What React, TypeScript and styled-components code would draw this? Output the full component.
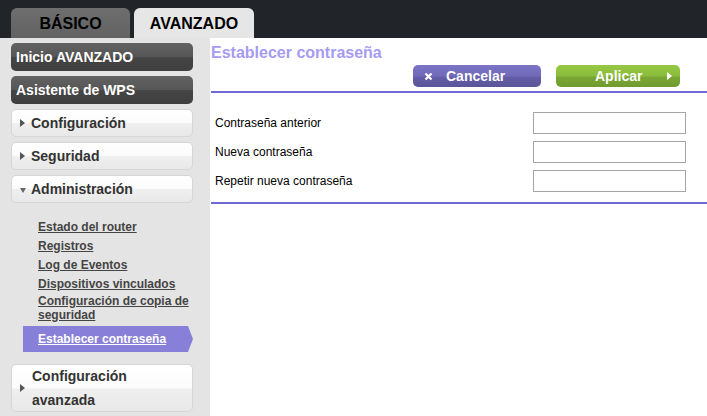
import React from 'react';
import styled, { createGlobalStyle } from 'styled-components';

const GlobalStyle = createGlobalStyle`
  html, body {
    margin: 0;
    padding: 0;
    background: #ffffff;
    font-family: "Liberation Sans", Arial, sans-serif;
  }
`;

const Page = styled.div`
  width: 707px;
  height: 416px;
  display: flex;
  flex-direction: column;
  overflow: hidden;
`;

const TopBar = styled.div`
  height: 38px;
  flex-shrink: 0;
  background: #212529;
  display: flex;
  align-items: flex-end;
  gap: 4px;
  padding-left: 11px;
  box-sizing: border-box;
`;

const Tab = styled.div<{ $active?: boolean }>`
  width: ${(p) => (p.$active ? '120px' : '119px')};
  height: 30px;
  border-radius: 6px 6px 0 0;
  background: ${(p) => (p.$active ? '#e6e6e6' : 'linear-gradient(#6e6e6e, #626262)')};
  color: #000;
  font-size: 16px;
  font-weight: bold;
  display: flex;
  align-items: center;
  justify-content: center;
  padding-top: 2px;
  box-sizing: border-box;
`;

const Body = styled.div`
  flex: 1;
  display: flex;
  min-height: 0;
`;

const Sidebar = styled.div`
  width: 210px;
  background: #e4e4e4;
  padding: 5px 0 0 11px;
  box-sizing: border-box;
  display: flex;
  flex-direction: column;
`;

const DarkButton = styled.div`
  width: 182px;
  height: 28px;
  flex-shrink: 0;
  border-radius: 5px;
  background: linear-gradient(#626262 0%, #565656 50%, #454545 52%, #3f3f3f 100%);
  color: #fff;
  font-size: 14px;
  font-weight: bold;
  display: flex;
  align-items: center;
  padding-left: 5px;
  box-sizing: border-box;
  margin-bottom: 5px;
`;

const LightButton = styled.div<{ $tall?: boolean }>`
  width: 182px;
  height: ${(p) => (p.$tall ? '48px' : '28px')};
  flex-shrink: 0;
  border-radius: 5px;
  border: 1px solid #d6d6d6;
  background: linear-gradient(#ffffff 0%, #fbfbfb 50%, #efefef 52%, #e8e8e8 100%);
  color: #333;
  font-size: 14px;
  font-weight: bold;
  display: flex;
  align-items: center;
  padding-left: 8px;
  box-sizing: border-box;
  margin-bottom: 5px;
`;

const Arrow = styled.span<{ $down?: boolean }>`
  display: inline-block;
  flex-shrink: 0;
  width: 0;
  height: 0;
  margin-right: 6px;
  ${(p) =>
    p.$down
      ? `border-left: 3.5px solid transparent; border-right: 3.5px solid transparent; border-top: 5px solid #666; margin-top: 2px; margin-right: 5px;`
      : `border-top: 4px solid transparent; border-bottom: 4px solid transparent; border-left: 5px solid #555;`}
`;

const TwoLines = styled.span`
  display: flex;
  flex-direction: column;
  line-height: 24px;
  margin-left: 1px;
`;

const SubMenu = styled.div`
  display: flex;
  flex-direction: column;
  margin: 10px 0 12px 0;
`;

const SubLink = styled.a<{ $two?: boolean }>`
  display: block;
  padding-left: 27px;
  font-size: 12px;
  font-weight: bold;
  color: #444;
  text-decoration: underline;
  line-height: ${(p) => (p.$two ? '14px' : '19px')};
  width: 185px;
  box-sizing: border-box;
`;

const ActiveLink = styled.a`
  display: flex;
  align-items: center;
  margin: 4px 0 0 12px;
  width: 170px;
  height: 26px;
  padding-left: 15px;
  box-sizing: border-box;
  background: #8880d8;
  clip-path: polygon(0 0, 165px 0, 100% 50%, 165px 100%, 0 100%);
  color: #fff;
  font-size: 12px;
  font-weight: bold;
  text-decoration: underline;
`;

const Content = styled.div`
  flex: 1;
  background: #fff;
  padding-left: 1px;
  display: flex;
  flex-direction: column;
`;

const Title = styled.div`
  margin-top: 4px;
  line-height: 22px;
  font-size: 16px;
  font-weight: bold;
  color: #a59cf2;
`;

const ButtonRow = styled.div`
  display: flex;
  justify-content: flex-end;
  gap: 15px;
  padding-right: 27px;
  margin-top: 1px;
`;

const ActionButton = styled.div<{ $kind: 'cancel' | 'apply' }>`
  width: ${(p) => (p.$kind === 'cancel' ? '128px' : '124px')};
  height: 22px;
  border-radius: 5px;
  background: ${(p) =>
    p.$kind === 'cancel'
      ? 'linear-gradient(#7c74c6 0%, #716ab9 50%, #645da8 55%, #5a5499 100%)'
      : 'linear-gradient(#96c845 0%, #8bbd3c 50%, #7ba634 55%, #719a2f 100%)'};
  color: #fff;
  font-size: 14px;
  font-weight: bold;
  display: flex;
  align-items: center;
  position: relative;
  box-sizing: border-box;
  padding-left: ${(p) => (p.$kind === 'cancel' ? '0' : '39px')};
`;

const Rule = styled.div<{ $top: number }>`
  height: 2px;
  background: #7068d6;
  margin-top: ${(p) => p.$top}px;
`;

const Form = styled.div`
  display: flex;
  flex-direction: column;
  gap: 7px;
  margin-top: 19px;
  padding: 0 21px 0 4px;
`;

const Row = styled.div`
  display: flex;
  align-items: center;
  justify-content: space-between;
  height: 22px;
`;

const Label = styled.label`
  font-size: 12px;
  color: #000;
`;

const Input = styled.input`
  width: 153px;
  height: 22px;
  box-sizing: border-box;
  border: 1px solid #a5a5a5;
  padding: 0 3px;
  margin: 0;
  font-family: inherit;
  font-size: 12px;
`;

const CloseIcon = () => (
  <svg width="9" height="9" viewBox="0 0 9 9" style={{ marginLeft: 11, marginRight: 13 }}>
    <path d="M1.5 1.5 L7.5 7.5 M7.5 1.5 L1.5 7.5" stroke="#fff" strokeWidth="2.2" />
  </svg>
);

const PlayIcon = styled.span`
  position: absolute;
  right: 8px;
  top: 7px;
  width: 0;
  height: 0;
  border-top: 4px solid transparent;
  border-bottom: 4px solid transparent;
  border-left: 5px solid #fff;
`;

const App: React.FC = () => {
  const fields = ['Contraseña anterior', 'Nueva contraseña', 'Repetir nueva contraseña'];
  return (
    <Page>
      <GlobalStyle />
      <TopBar>
        <Tab>BÁSICO</Tab>
        <Tab $active>AVANZADO</Tab>
      </TopBar>
      <Body>
        <Sidebar>
          <DarkButton>Inicio AVANZADO</DarkButton>
          <DarkButton>Asistente de WPS</DarkButton>
          <LightButton>
            <Arrow />
            Configuración
          </LightButton>
          <LightButton>
            <Arrow />
            Seguridad
          </LightButton>
          <LightButton>
            <Arrow $down />
            Administración
          </LightButton>
          <SubMenu>
            <SubLink>Estado del router</SubLink>
            <SubLink>Registros</SubLink>
            <SubLink>Log de Eventos</SubLink>
            <SubLink>Dispositivos vinculados</SubLink>
            <SubLink $two>Configuración de copia de seguridad</SubLink>
            <ActiveLink>Establecer contraseña</ActiveLink>
          </SubMenu>
          <LightButton $tall>
            <Arrow />
            <TwoLines>
              <span>Configuración</span>
              <span>avanzada</span>
            </TwoLines>
          </LightButton>
        </Sidebar>
        <Content>
          <Title>Establecer contraseña</Title>
          <ButtonRow>
            <ActionButton $kind="cancel">
              <CloseIcon />
              Cancelar
            </ActionButton>
            <ActionButton $kind="apply">
              Aplicar
              <PlayIcon />
            </ActionButton>
          </ButtonRow>
          <Rule $top={4} />
          <Form>
            {fields.map((f) => (
              <Row key={f}>
                <Label>{f}</Label>
                <Input type="password" />
              </Row>
            ))}
          </Form>
          <Rule $top={10} />
        </Content>
      </Body>
    </Page>
  );
};

export default App;
